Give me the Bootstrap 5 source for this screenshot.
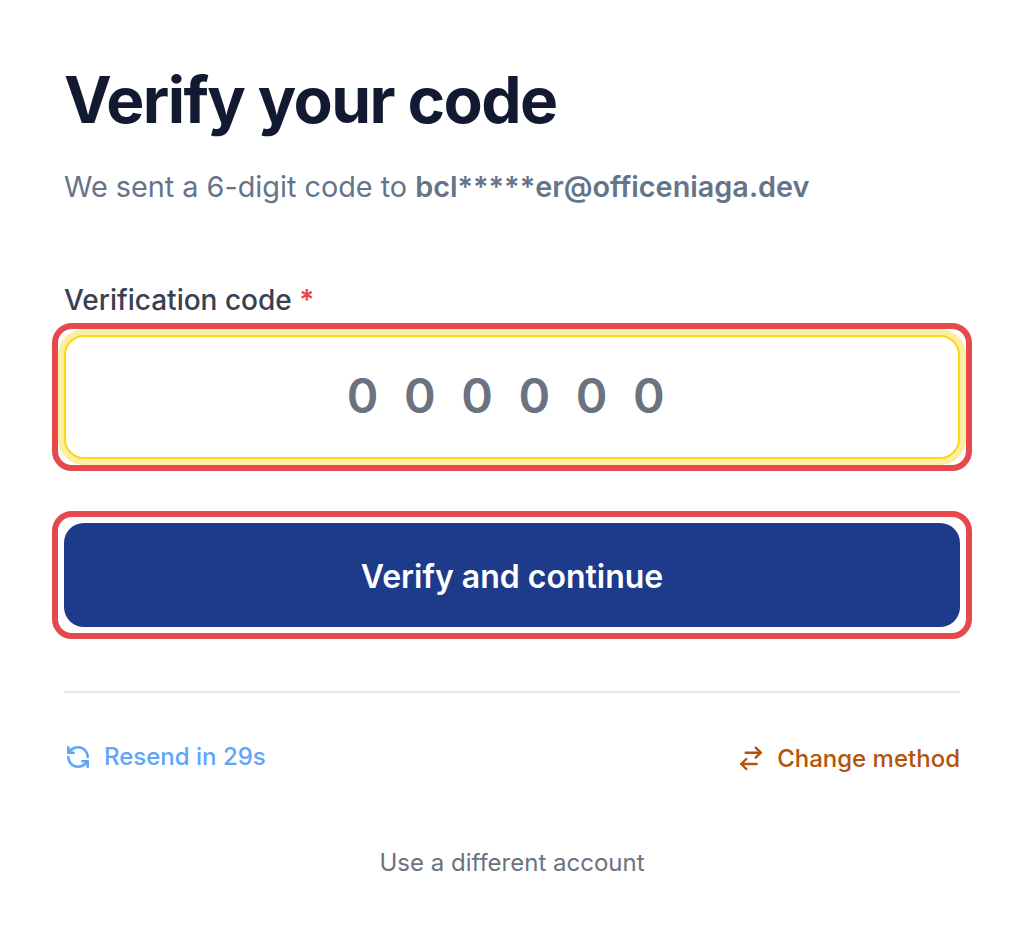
<!DOCTYPE html>
<html lang="en">
<head>
<meta charset="utf-8">
<title>Verify your code</title>
<link href="https://cdn.jsdelivr.net/npm/bootstrap@5.3.0/dist/css/bootstrap.min.css" rel="stylesheet">
<style>
html,body{height:940px;overflow:hidden;background:#fff}
body{font-family:Inter,"Liberation Sans",sans-serif;-webkit-font-smoothing:antialiased}
.shell{padding:64px 64px 0}
.ttl{font-size:64px;line-height:72px;font-weight:700;letter-spacing:-1.6px;color:#111a30;margin:0 0 31px}
.sub{font-size:28.8px;line-height:40px;color:#64748b;margin:0 0 75px}
.sub b{font-weight:600}
.lbl{font-size:28px;line-height:36px;font-weight:500;color:#374151;margin:0 0 5px;display:block}
.lbl span{color:#ef4444;font-weight:600}
.ringed{border:6px solid #e5484d;border-radius:20px;padding:6px;margin:0 -12px}
.ringed + .ringed{margin-top:40px}
.code{height:124px;border:2px solid #fad912;border-radius:20px;background:#fff;box-shadow:0 0 0 6px #fdeea6;text-align:center;font-size:48px;font-weight:600;letter-spacing:25.6px;color:#6b7280;width:100%;display:block;padding:0 0 4px 13px;outline:0}
.code::placeholder{color:#6b7280;opacity:1}
.go{display:block;width:100%;height:104px;background:#1e3a8a;color:#fff;border:0;border-radius:20px;font-size:32px;font-weight:600;padding:3px 0 0}
.rule{border:0;border-top:2px solid #e5e7eb;opacity:1;margin:52px 0 0}
.acts{margin-top:46px}
.act{display:inline-flex;align-items:center;gap:12px;background:none;border:0;padding:0;font-size:24px;line-height:36px;font-weight:500}
.act svg{width:28px;height:28px;flex:none}
.a1{color:#60a5fa}.a2{color:#b45309;margin-top:2px}
.alt{display:block;margin:68px auto 0;background:none;border:0;color:#6b7280;font-size:24px;line-height:36px;padding:0}
</style>
</head>
<body>
<main class="shell">
<h1 class="ttl">Verify your code</h1>
<p class="sub">We sent a 6-digit code to <b>bcl*****er@officeniaga.dev</b></p>
<form onsubmit="return false">
<label class="lbl" for="c">Verification code <span>*</span></label>
<div class="ringed"><input id="c" class="code" placeholder="000000" autocomplete="off"></div>
<div class="ringed"><button class="go" type="submit">Verify and continue</button></div>
</form>
<hr class="rule">
<div class="acts d-flex justify-content-between align-items-start">
<button class="act a1" type="button"><svg viewBox="-1 -1 26 26" fill="none" stroke="currentColor" stroke-width="2.4" stroke-linecap="round" stroke-linejoin="round"><path d="M21 12a9 9 0 0 0-9-9 9.75 9.75 0 0 0-6.74 2.74L3 8"/><path d="M3 3v5h5"/><path d="M3 12a9 9 0 0 0 9 9 9.75 9.75 0 0 0 6.74-2.74L21 16"/><path d="M16 16h5v5"/></svg>Resend in 29s</button>
<button class="act a2" type="button"><svg viewBox="0 0 28 28" fill="none" stroke="currentColor" stroke-width="2.4" stroke-linecap="round" stroke-linejoin="round"><path d="M8.7 7.7h15"/><path d="M18.7 2.7l5 5-5 5"/><path d="M19.7 19H4.3"/><path d="M9.3 14l-5 5 5 5"/></svg>Change method</button>
</div>
<button class="alt" type="button">Use a different account</button>
</main>
<script src="https://cdn.jsdelivr.net/npm/bootstrap@5.3.0/dist/js/bootstrap.bundle.min.js"></script>
</body>
</html>
